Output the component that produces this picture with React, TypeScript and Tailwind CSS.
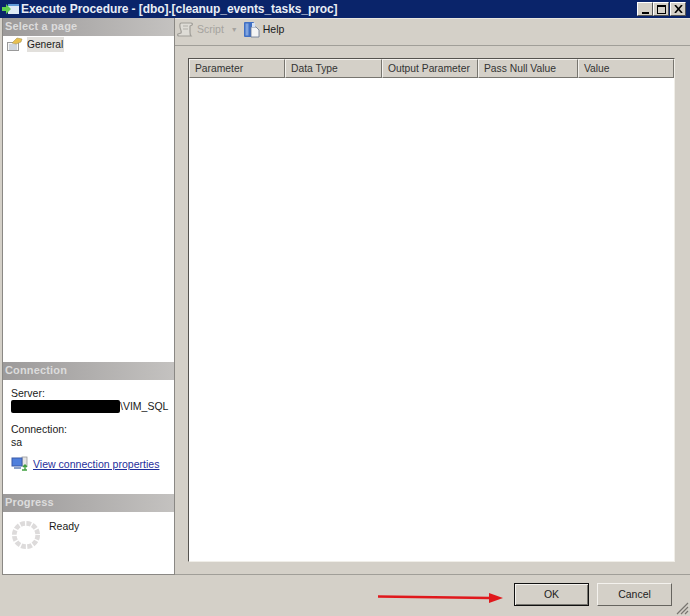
import React from "react";

const columns = [
  { label: "Parameter", width: "w-[96px]" },
  { label: "Data Type", width: "w-[97px]" },
  { label: "Output Parameter", width: "w-[96px]" },
  { label: "Pass Null Value", width: "w-[100px]" },
  { label: "Value", width: "flex-1" },
];

const SectionHeader = ({ title }: { title: string }) => (
  <div className="h-[18px] shrink-0 bg-gradient-to-r from-[#9c9a9a] to-[#c4c2c0] pl-[2px] text-[11px] font-bold leading-[17px] tracking-[0.15px] text-[#dcdcdc]">
    {title}
  </div>
);

const WinButton = ({ children }: { children: React.ReactNode }) => (
  <div className="flex h-[14px] w-[16px] items-center justify-center border border-b-[#555] border-l-white border-r-[#555] border-t-white bg-[#d4d0c8] text-black">
    {children}
  </div>
);

const Spinner = () => (
  <svg width="30" height="30" viewBox="0 0 32 32" className="shrink-0">
    <circle cx="16" cy="16" r="12.5" fill="none" stroke="#dddbdb" strokeWidth="5" strokeDasharray="5 1.55" />
  </svg>
);

export default function App() {
  return (
    <div className="flex h-[616px] w-[690px] flex-col overflow-hidden bg-[#d4d0c8] font-['Liberation_Sans',sans-serif] text-[10.5px] text-[#1a1a1a]">
      {/* title bar */}
      <div className="flex h-[18px] shrink-0 items-center bg-[#0a246a] pl-[2px] pr-[4px]">
        <svg width="18" height="14" viewBox="0 0 18 14" className="shrink-0">
          <rect x="6" y="2" width="11" height="10" fill="#dfeaf6" />
          <rect x="6" y="2" width="11" height="2" fill="#5f9ad8" />
          <path d="M0 5h4V2l5 5-5 5V9H0z" fill="#5fd04f" />
        </svg>
        <span className="ml-[1px] flex-1 whitespace-nowrap text-[12px] font-bold tracking-[-0.08px] text-[#e8edf5]">
          Execute Procedure - [dbo].[cleanup_events_tasks_proc]
        </span>
        <div className="flex items-center">
          <WinButton>
            <span className="mt-[7px] h-[2px] w-[7px] bg-black" />
          </WinButton>
          <WinButton>
            <span className="h-[9px] w-[9px] border border-t-2 border-black" />
          </WinButton>
          <div className="ml-[1px]">
            <WinButton>
              <svg width="9" height="8" viewBox="0 0 9 8">
                <path d="M1 0l7 8M8 0L1 8" stroke="#000" strokeWidth="1.6" />
              </svg>
            </WinButton>
          </div>
        </div>
      </div>

      <div className="flex min-h-0 flex-1">
        {/* left panel */}
        <div className="ml-[2px] flex w-[173px] shrink-0 flex-col border-b border-l border-r border-[#8a8884] bg-white">
          <SectionHeader title="Select a page" />
          <div className="flex-1">
            <div className="flex h-[16px] items-center pl-[3px]">
              <svg width="18" height="16" viewBox="0 0 18 16" className="shrink-0">
                <rect x="1.5" y="6.5" width="11" height="8" fill="#f6f6f4" stroke="#9a9a9a" />
                <path d="M3 9h8M3 11h8M3 13h8" stroke="#a8b4c6" />
                <path d="M6 7l3-3 2-2 5 1-1 3-5 2z" fill="#e8c050" stroke="#9a8a50" strokeWidth="0.5" />
              </svg>
              <span className="ml-[3px] bg-[#e2e0dc] pr-[1px] text-[10.2px] leading-[15px]">General</span>
            </div>
          </div>
          <SectionHeader title="Connection" />
          <div className="h-[114px] shrink-0 pl-[8px] pt-[7px] leading-[13px]">
            <div>Server:</div>
            <div className="flex h-[13px] items-center">
              <span className="h-[13px] w-[109px] rounded-[2px] bg-black" />
              <span>\VIM_SQL</span>
            </div>
            <div className="mt-[10px]">Connection:</div>
            <div>sa</div>
            <div className="mt-[7px] flex items-center">
              <svg width="18" height="16" viewBox="0 0 18 16" className="shrink-0">
                <rect x="11" y="1" width="5" height="9" fill="#e4e4e4" stroke="#9a9a9a" strokeWidth="0.8" />
                <rect x="1" y="2" width="10" height="8" fill="#4f7fdc" stroke="#3a5aa8" />
                <rect x="3" y="11" width="7" height="2" fill="#8aa0c8" />
                <path d="M14 9v5M11 14h5M12 11l2-2 2 2" fill="none" stroke="#3fa03f" strokeWidth="1.4" />
              </svg>
              <span className="ml-[4px] whitespace-nowrap text-[10.55px] text-[#1f2f9c] underline">View connection properties</span>
            </div>
          </div>
          <SectionHeader title="Progress" />
          <div className="flex h-[62px] shrink-0 pl-[8px] pt-[8px]">
            <Spinner />
            <span className="ml-[8px] mt-[-1px]">Ready</span>
          </div>
        </div>

        {/* right panel */}
        <div className="flex min-w-0 flex-1 flex-col border-t border-[#e8e6e0]">
          <div className="flex h-[26px] shrink-0 items-center pb-[4px] pl-[1px] text-[#1a1a1a]">
            <svg width="18" height="18" viewBox="0 0 18 18" className="shrink-0">
              <path d="M5 2h10c1 0 2 1 1 2l-2 1v6c0 2 0 3 1 4H3c-1 0-2-1-1-2l3-1c1-2-1-4-1-6S3 3 5 2z" fill="#dedcd6" stroke="#a09e98" strokeWidth="1.2" />
              <path d="M7 5h5M7 8h5" stroke="#b0aea8" />
            </svg>
            <span className="ml-[3px] text-[#a5a39e]">Script</span>
            <span className="ml-[7px] text-[7px] text-[#a5a39e]">▼</span>
            <svg width="18" height="18" viewBox="0 0 18 18" className="ml-[5px] shrink-0">
              <rect x="1" y="1" width="10" height="15" rx="1" fill="#3f6fc4" />
              <rect x="2.5" y="2.5" width="3" height="12" fill="#7fa4e0" />
              <path d="M8 6h5l3 3v7H8z" fill="#f4f4f4" stroke="#66758f" strokeWidth="0.8" />
              <path d="M9 2h3v4H9z" fill="#d6e2f4" />
            </svg>
            <span className="ml-[2px]">Help</span>
          </div>
          <div className="flex flex-1 flex-col border-b border-t border-[#a09e98] pb-[12px] pl-[13px] pr-[15px] pt-[12px]">
            <div className="flex min-h-0 flex-1 flex-col border border-b-[#f0eee8] border-l-[#55534f] border-r-[#f0eee8] border-t-[#55534f] bg-white">
              <div className="flex h-[19px] shrink-0 text-[10.3px] text-[#333]">
                {columns.map((col) => (
                  <div
                    key={col.label}
                    className={`${col.width} whitespace-nowrap border border-b-[#77756f] border-l-[#f4f2ee] border-r-[#77756f] border-t-[#f4f2ee] bg-[#d4d0c8] pl-[5px] leading-[17px]`}
                  >
                    {col.label}
                  </div>
                ))}
              </div>
            </div>
          </div>
        </div>
      </div>

      {/* footer */}
      <div className="relative flex h-[41px] shrink-0 items-start pl-[378px] pt-[8px]">
        <svg width="126" height="12" viewBox="0 0 126 12" className="mt-[9px] shrink-0">
          <path d="M0 4.5L112 6" stroke="#e0181c" strokeWidth="2.4" />
          <path d="M111 1l14 5-14 5z" fill="#e0181c" />
        </svg>
        <button className="ml-[10px] h-[23px] w-[75px] border border-[#111] bg-[#d4d0c8] text-[10.5px] text-[#222] shadow-[inset_1px_1px_0_#f4f2ee,inset_-1px_-1px_0_#77756f]">
          OK
        </button>
        <button className="ml-[8px] h-[23px] w-[75px] border border-b-[#66645f] border-l-[#f4f2ee] border-r-[#66645f] border-t-[#f4f2ee] bg-[#d4d0c8] text-[10.5px] text-[#222]">
          Cancel
        </button>
        <svg width="14" height="14" viewBox="0 0 14 14" className="absolute bottom-[1px] right-[1px]">
          <path d="M13 2L2 13M13 6L6 13M13 10l-3 3" stroke="#77756f" strokeWidth="1.2" />
        </svg>
      </div>
    </div>
  );
}
